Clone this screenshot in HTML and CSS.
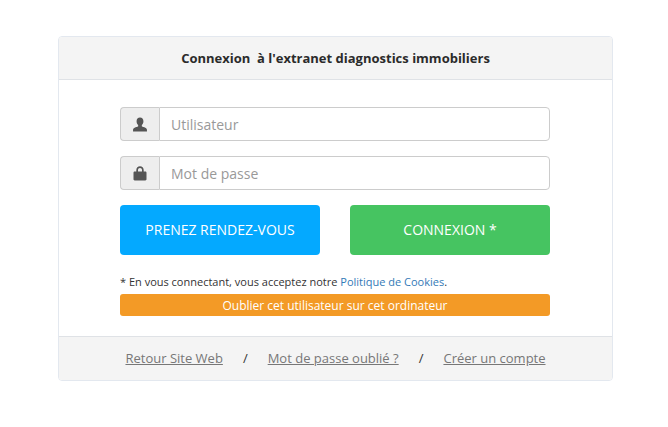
FILE: index.html
```html
<!DOCTYPE html>
<html lang="fr">
<head>
<meta charset="utf-8">
<title>Connexion</title>
<link rel="stylesheet" href="styles.css">
</head>
<body>
<main class="card">
  <header class="card-head">Connexion&nbsp; à l'extranet diagnostics immobiliers</header>
  <form class="card-body">
    <div class="field">
      <span class="addon">
        <svg class="icon" viewBox="0 0 14 14" width="16" height="15"><path d="M7 0.500c2 0 3.200 1.500 3.200 3.500 0 1.500-.6 2.800-1.500 3.600v1.100c0 .5 4.800 1 4.800 3.200V13.500H.5V11.900c0-2.200 4.800-2.700 4.800-3.200V7.600C4.400 6.800 3.800 5.500 3.800 4 3.800 2 5 .5 7 .5z"/></svg>
      </span>
      <input class="control" type="text" placeholder="Utilisateur">
    </div>
    <div class="field">
      <span class="addon">
        <svg class="icon" viewBox="0 0 14 15" width="14" height="15"><path d="M3.300 5.500V4C3.300 1.900 4.900.3 7 .3s3.700 1.600 3.700 3.700v1.500h1.600c.7 0 1.200.5 1.200 1.200v6.600c0 .7-.5 1.200-1.200 1.200H1.700c-.7 0-1.200-.5-1.200-1.200V6.700c0-.7.5-1.200 1.200-1.200zm1.700 0h4V4c0-1.200-.8-2-2-2s-2 .8-2 2z"/></svg>
      </span>
      <input class="control" type="password" placeholder="Mot de passe">
    </div>
    <div class="actions">
      <button class="btn btn-blue" type="button">PRENEZ RENDEZ-VOUS</button>
      <button class="btn btn-green" type="submit">CONNEXION *</button>
    </div>
    <p class="note">* En vous connectant, vous acceptez notre <a href="#">Politique de Cookies</a>.</p>
    <button class="forget" type="button">Oublier cet utilisateur sur cet ordinateur</button>
  </form>
  <footer class="card-foot">
    <a href="#">Retour Site Web</a>
    <span class="sep">/</span>
    <a href="#">Mot de passe oublié ?</a>
    <span class="sep">/</span>
    <a href="#">Créer un compte</a>
  </footer>
</main>
</body>
</html>
```
FILE: styles.css
```css
* { box-sizing: border-box; }
body {
  margin: 0;
  padding: 36px 55px 0 58px;
  background: #fff;
  font-family: "Open Sans", "Liberation Sans", sans-serif;
  color: #333;
}
.card {
  width: 555px;
  height: 345px;
  display: flex;
  flex-direction: column;
  border: 1px solid #e3e8ef;
  border-radius: 4px;
  overflow: hidden;
}
.card-head {
  height: 43px;
  flex: none;
  display: flex;
  align-items: center;
  justify-content: center;
  background: #f4f4f4;
  border-bottom: 1px solid #dfe2e6;
  font-size: 13px;
  font-weight: 700;
  color: #2b2b2b;
}
.card-body {
  flex: 1;
  padding: 27px 62px 0 61px;
  display: flex;
  flex-direction: column;
}
.field {
  height: 34px;
  display: flex;
  margin-bottom: 15px;
}
.addon {
  width: 39px;
  flex: none;
  display: flex;
  align-items: center;
  justify-content: center;
  padding-right: 1px;
  background: #eee;
  border: 1px solid #ccc;
  border-right: 0;
  border-radius: 4px 0 0 4px;
}
.icon { fill: #555; display: block; }
.control {
  flex: 1;
  min-width: 0;
  padding: 0 11px;
  border: 1px solid #ccc;
  border-radius: 0 4px 4px 0;
  background: #fff;
  font: 14px "Open Sans", "Liberation Sans", sans-serif;
  color: #555;
  outline: 0;
}
.control::placeholder { color: #999; opacity: 1; }
.actions {
  display: flex;
  justify-content: space-between;
}
.btn {
  width: 200px;
  height: 50px;
  border: 0;
  border-radius: 4px;
  color: #fff;
  font: 500 14px "Open Sans", "Liberation Sans", sans-serif;
  padding: 0 0 2px;
}
.btn-blue { background: #04a9ff; }
.btn-green { background: #46c461; }
.note {
  margin: 19px 0 0;
  font-size: 11px;
  line-height: 15px;
  color: #333;
}
.note a { color: #337ab7; text-decoration: none; }
.forget {
  margin-top: 5px;
  height: 22px;
  border: 0;
  padding: 0;
  border-radius: 3px;
  background: #f39a26;
  color: #fff;
  font: 500 12px "Open Sans", "Liberation Sans", sans-serif;
}
.card-foot {
  height: 44px;
  flex: none;
  display: flex;
  align-items: center;
  justify-content: center;
  gap: 20px;
  padding-bottom: 2px;
  background: #f4f4f4;
  border-top: 1px solid #dfe2e6;
  font-size: 13px;
}
.card-foot a { color: #777; text-decoration: underline; }
.sep { color: #333; }
```
